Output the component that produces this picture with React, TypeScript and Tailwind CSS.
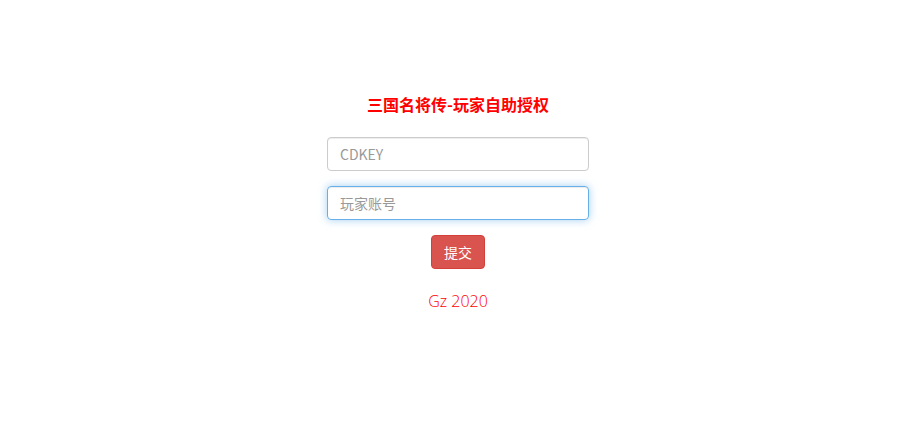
export default function App() {
  return (
    <div
      className="flex min-h-[446px] w-full justify-center bg-white pl-[10px] pt-[93px]"
      style={{ fontFamily: '"Noto Sans CJK SC", "Noto Sans", sans-serif' }}
    >
      <div className="flex w-[262px] flex-col items-center">
        <h1 className="text-[16px] font-bold leading-[22px] text-[#ff0000]">
          三国名将传-玩家自助授权
        </h1>
        <input
          type="text"
          placeholder="CDKEY"
          className="mt-[22px] h-[34px] w-full rounded-[4px] border border-[#cccccc] px-3 text-[14px] text-[#555] shadow-[inset_0_1px_1px_rgba(0,0,0,0.075)] outline-none placeholder:text-[#999]"
        />
        <input
          type="text"
          placeholder="玩家账号"
          className="mt-[15px] h-[34px] w-full rounded-[4px] border border-[#66afe9] px-3 text-[14px] text-[#555] shadow-[inset_0_1px_1px_rgba(0,0,0,0.075),0_0_8px_rgba(102,175,233,0.6)] outline-none placeholder:text-[#999]"
        />
        <button
          type="button"
          className="mt-[15px] h-[34px] w-[54px] rounded-[4px] border border-[#d43f3a] bg-[#d9534f] text-[14px] text-white"
        >
          提交
        </button>
        <p
          className="mt-[21px] text-[16px] font-light leading-[22px] text-[#ff0000]"
          style={{ fontFamily: '"Open Sans", "Noto Sans", sans-serif' }}
        >
          Gz 2020
        </p>
      </div>
    </div>
  );
}
